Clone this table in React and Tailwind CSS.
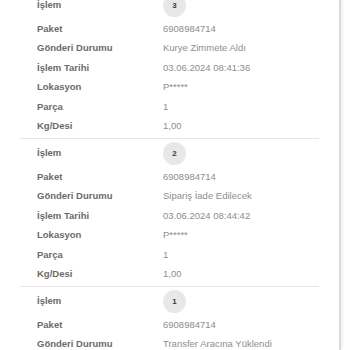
const records = [
  {
    step: 3,
    rows: [
      ['Paket', '6908984714'],
      ['Gönderi Durumu', 'Kurye Zimmete Aldı'],
      ['İşlem Tarihi', '03.06.2024 08:41:36'],
      ['Lokasyon', 'P*****'],
      ['Parça', '1'],
      ['Kg/Desi', '1,00'],
    ],
  },
  {
    step: 2,
    rows: [
      ['Paket', '6908984714'],
      ['Gönderi Durumu', 'Sipariş İade Edilecek'],
      ['İşlem Tarihi', '03.06.2024 08:44:42'],
      ['Lokasyon', 'P*****'],
      ['Parça', '1'],
      ['Kg/Desi', '1,00'],
    ],
  },
  {
    step: 1,
    rows: [
      ['Paket', '6908984714'],
      ['Gönderi Durumu', 'Transfer Aracına Yüklendi'],
      ['İşlem Tarihi', '03.06.2024 08:12:05'],
      ['Lokasyon', 'P*****'],
      ['Parça', '1'],
      ['Kg/Desi', '1,00'],
    ],
  },
];

function Row({ label, value }) {
  return (
    <div className="flex h-[19.5px] items-center">
      <div className="w-[126px] shrink-0 text-[9.5px] font-bold text-[#6a6a6a]">{label}</div>
      <div className="text-[9.5px] text-[#8e8e8e]">{value}</div>
    </div>
  );
}

function Record({ step, rows }) {
  return (
    <div className="mx-[20px] border-b border-[#e6e6e6] pt-[1px] pb-[2px]">
      <div className="pl-[17px]">
        <div className="flex h-[27px] items-center">
          <div className="w-[126px] shrink-0 text-[9.5px] font-bold text-[#6a6a6a]">İşlem</div>
          <div className="flex h-[23px] w-[23px] items-center justify-center rounded-full bg-[#e8e8e8] text-[8px] font-bold text-[#3a3a3a]">
            {step}
          </div>
        </div>
        {rows.map(([label, value]) => (
          <Row key={label} label={label} value={value} />
        ))}
      </div>
    </div>
  );
}

export default function App() {
  return (
    <div
      className="flex h-[350px] w-[350px] overflow-hidden bg-white"
      style={{ fontFamily: '"Liberation Sans", Arial, sans-serif' }}
    >
      <div className="w-[341px] shrink-0 border-r-[2px] border-[#dadada] shadow-[2px_0_3px_rgba(0,0,0,0.06)]">
        <div className="-mt-[9px]">
          {records.map((r) => (
            <Record key={r.step} step={r.step} rows={r.rows} />
          ))}
        </div>
      </div>
    </div>
  );
}
